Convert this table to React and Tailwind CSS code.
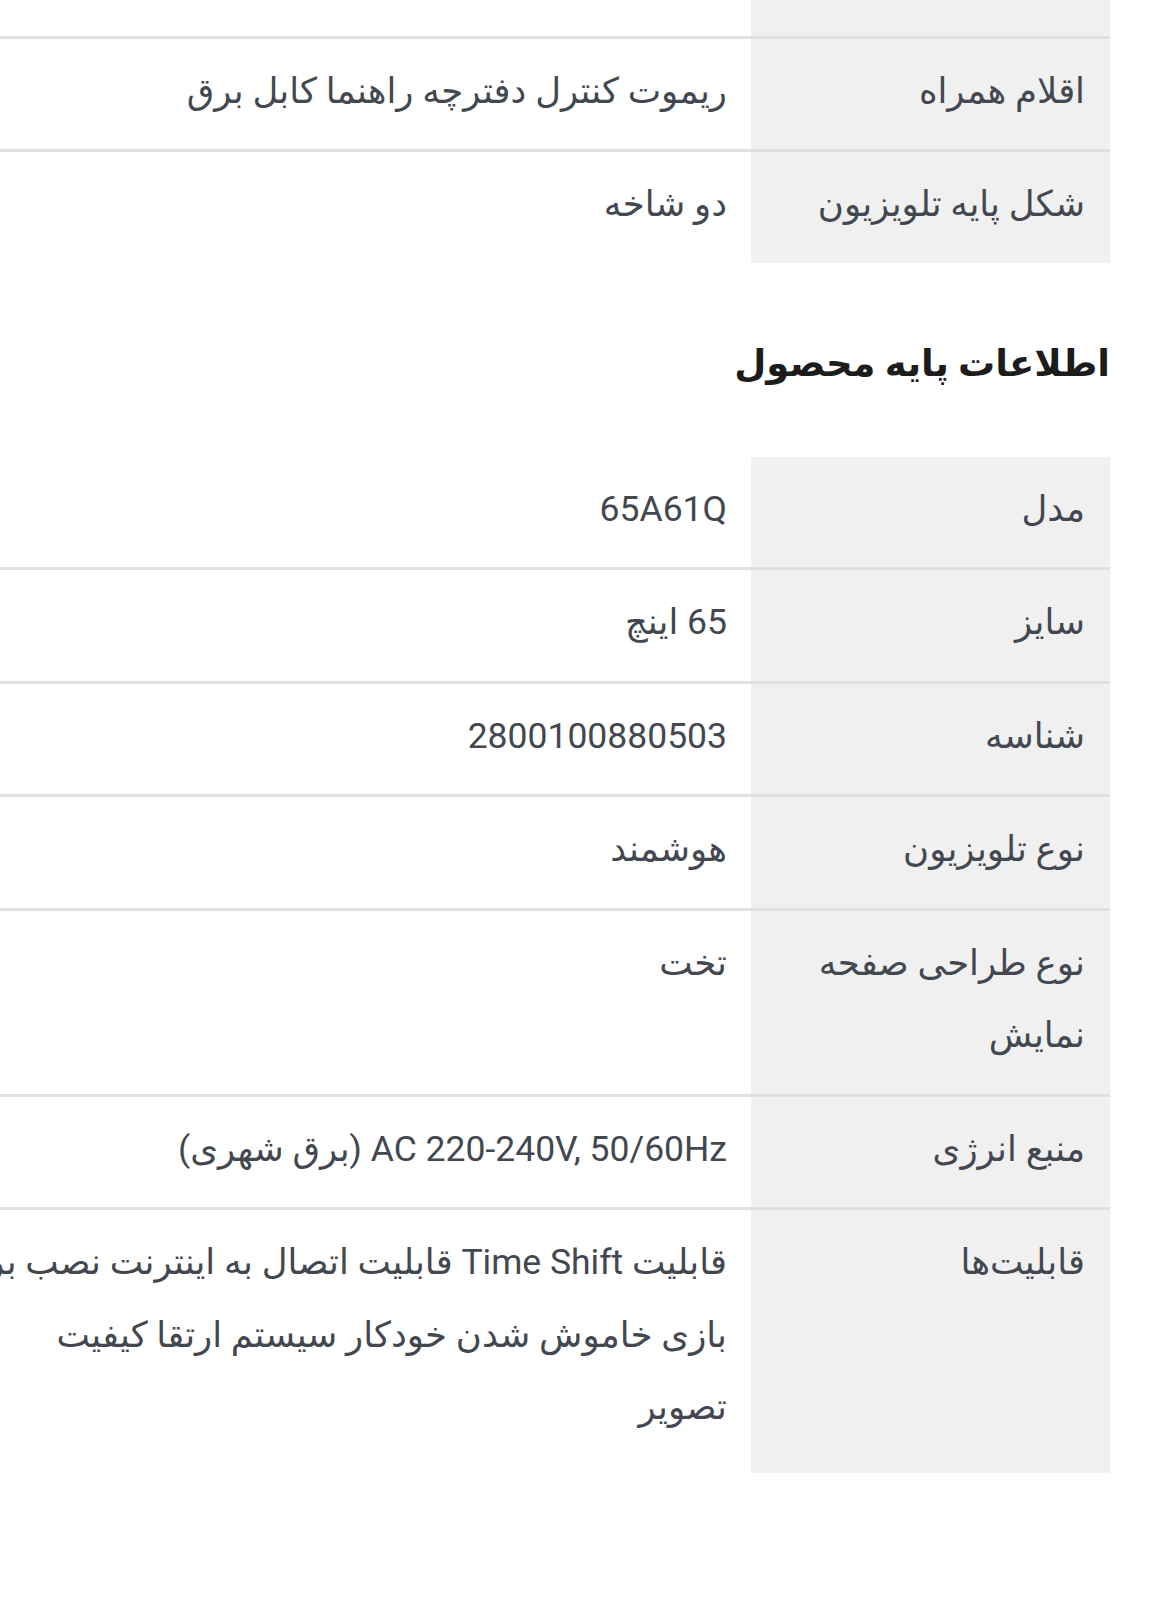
import React from "react";

const Row = ({ label, children, last, pad = "pt-[16px] pb-[22px]" }) => (
  <div
    className={
      "flex items-stretch " +
      (last ? "" : "border-b-[3px] border-[#e0e0e2]")
    }
  >
    <div
      className={
        "w-[359px] shrink-0 bg-[#f0f0f1] pr-[25px] pl-[16px] leading-[72.5px] " +
        pad
      }
    >
      {label}
    </div>
    <div className={"flex-1 pr-[24px] pl-[16px] leading-[72.5px] " + pad}>
      {children}
    </div>
  </div>
);

export default function App() {
  return (
    <div
      dir="rtl"
      className="w-[1158px] min-h-[1621px] overflow-hidden bg-white text-[#424750] text-[35.5px] font-['Roboto','DejaVu_Sans',sans-serif]"
    >
      <div className="mr-[48px] w-[1170px] -mt-[75px]">
        <div>
          <Row label="رزولوشن" pad="pt-0 pb-[38px]">
            <span></span>
          </Row>
          <Row label="اقلام همراه">ریموت کنترل دفترچه راهنما کابل برق</Row>
          <Row label="شکل پایه تلویزیون" last>
            دو شاخه
          </Row>
        </div>

        <h2 className="mt-[76px] mb-[68px] leading-[50px] text-[37px] font-bold text-[#1c1c1c]">
          اطلاعات پایه محصول
        </h2>

        <div>
          <Row label="مدل">65A61Q</Row>
          <Row label="سایز">65 اینچ</Row>
          <Row label="شناسه">2800100880503</Row>
          <Row label="نوع تلویزیون">هوشمند</Row>
          <Row
            label={
              <>
                <div>نوع طراحی صفحه</div>
                <div>نمایش</div>
              </>
            }
          >
            تخت
          </Row>
          <Row label="منبع انرژی">
            <span>AC 220-240V, 50/60Hz (برق شهری)</span>
          </Row>
          <Row label="قابلیت‌ها" last pad="pt-[16px] pb-[29px]">
            <div className="whitespace-nowrap">
              قابلیت Time Shift قابلیت اتصال به اینترنت نصب برنامه
            </div>
            <div className="whitespace-nowrap">
              بازی خاموش شدن خودکار سیستم ارتقا کیفیت
            </div>
            <div className="whitespace-nowrap">تصویر</div>
          </Row>
        </div>
      </div>
    </div>
  );
}
